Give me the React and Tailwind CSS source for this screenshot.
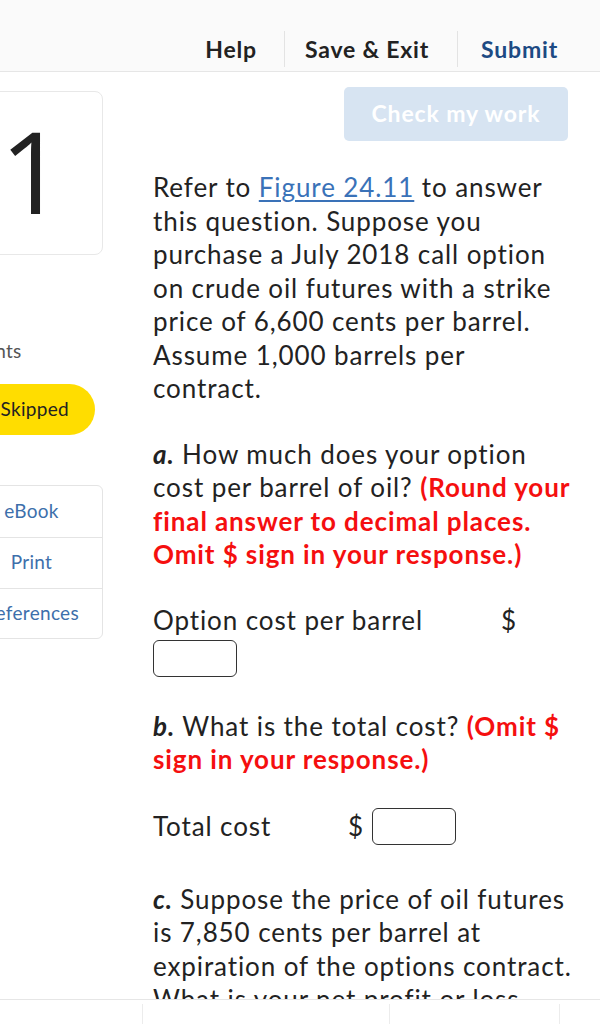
import React from 'react';

const font = { fontFamily: 'Lato, "Noto Sans", sans-serif' };

const Header = () => (
  <div className="h-[72px] bg-[#fafafa] border-b border-[#e6e6e6] flex justify-end items-stretch pr-[42px] pt-[31px] pb-[4px] text-[23px] tracking-[0.8px] font-bold">
    <div className="flex items-center pr-[27px] border-r border-[#e3e3e3] text-[#222]">Help</div>
    <div className="flex items-center pl-[20px] pr-[28px] border-r border-[#e3e3e3] text-[#222]">Save &amp; Exit</div>
    <div className="flex items-center pl-[23px] text-[#1d4a83]">Submit</div>
  </div>
);

const Sidebar = () => (
  <div className="w-[143px] shrink-0 -ml-[40px] pt-[19px] text-[19px] tracking-[0.3px]">
    {/* Question number */}
    <div className="h-[164px] border border-[#e8e8e8] rounded-[8px] bg-white flex items-center justify-center">
      <span className="text-[114px] leading-none text-[#222] tracking-normal -mt-[6px] ml-[2px]" style={{ fontFamily: '"Open Sans", sans-serif' }}>1</span>
    </div>
    <div className="mt-[82px] pl-[8px] text-[#555]">Points</div>
    <div className="mt-[18px] h-[51px] w-[135px] rounded-full bg-[#ffdd00] flex items-center justify-end pr-[26px] text-[#222]">
      Skipped
    </div>
    {/* Tool links */}
    <div className="mt-[50px] border border-[#e4e4e4] rounded-[6px] bg-white text-[#3d6fab]">
      <div className="h-[52px] flex items-center justify-center border-b border-[#e4e4e4]">eBook</div>
      <div className="h-[51px] flex items-center justify-center border-b border-[#e4e4e4]">Print</div>
      <div className="h-[49px] flex items-center justify-center">References</div>
    </div>
  </div>
);

const Red = ({ children }) => <span className="font-bold text-[#f50f0f]">{children}</span>;

const Input = () => <span className="inline-block w-[84px] h-[37px] border-[1.5px] border-[#333] rounded-[6px] bg-white align-middle"></span>;

const Question = () => (
  <div className="w-[424px] shrink-0 ml-[50px] text-[26px] tracking-[0.9px] leading-[33.5px] text-[#222]">
    <div className="flex justify-end pr-[9px] pt-[15px]">
      <div className="w-[224px] h-[54px] rounded-[5px] bg-[#d7e4f2] flex items-center justify-center text-white font-bold text-[23px] tracking-[0.9px]">
        Check my work
      </div>
    </div>

    <p className="mt-[30px]">
      Refer to <span className="text-[#3a72b8] underline underline-offset-[3px]">Figure 24.11</span> to answer this question. Suppose you purchase a July 2018 call option on crude oil futures with a strike price of 6,600 cents per barrel. Assume 1,000 barrels per contract.
    </p>

    <p className="mt-[32px]">
      <b><i>a.</i></b> How much does your option cost per barrel of oil? <Red>(Round your final answer to decimal places. Omit $ sign in your response.)</Red>
    </p>

    <div className="mt-[32px]">
      <div className="flex">
        <span className="w-[348px]">Option cost per barrel</span>
        <span>$</span>
      </div>
      <div className="mt-[2px]"><Input /></div>
    </div>

    <p className="mt-[33px]">
      <b><i>b.</i></b> What is the total cost? <Red>(Omit $ sign in your response.)</Red>
    </p>

    <div className="mt-[31px] flex items-center">
      <span className="w-[195px]">Total cost</span>
      <span className="mr-[8px]">$</span>
      <Input />
    </div>

    <p className="mt-[38px]">
      <b><i>c.</i></b> Suppose the price of oil futures is 7,850 cents per barrel at expiration of the options contract. What is your net profit or loss from this position?
    </p>
  </div>
);

const Footer = () => (
  <div className="fixed left-0 right-0 bottom-0 h-[25px] bg-white border-t border-[#e6e6e6] flex pt-[4px]">
    <div className="w-[143px] border-r border-[#ececec]"></div>
    <div className="w-[247px] border-r border-[#ececec]"></div>
    <div className="w-[170px] border-r border-[#ececec]"></div>
  </div>
);

export default function App() {
  return (
    <div className="w-[600px] h-[1024px] overflow-hidden bg-white relative" style={font}>
      <Header />
      <div className="flex">
        <Sidebar />
        <Question />
      </div>
      <Footer />
    </div>
  );
}
